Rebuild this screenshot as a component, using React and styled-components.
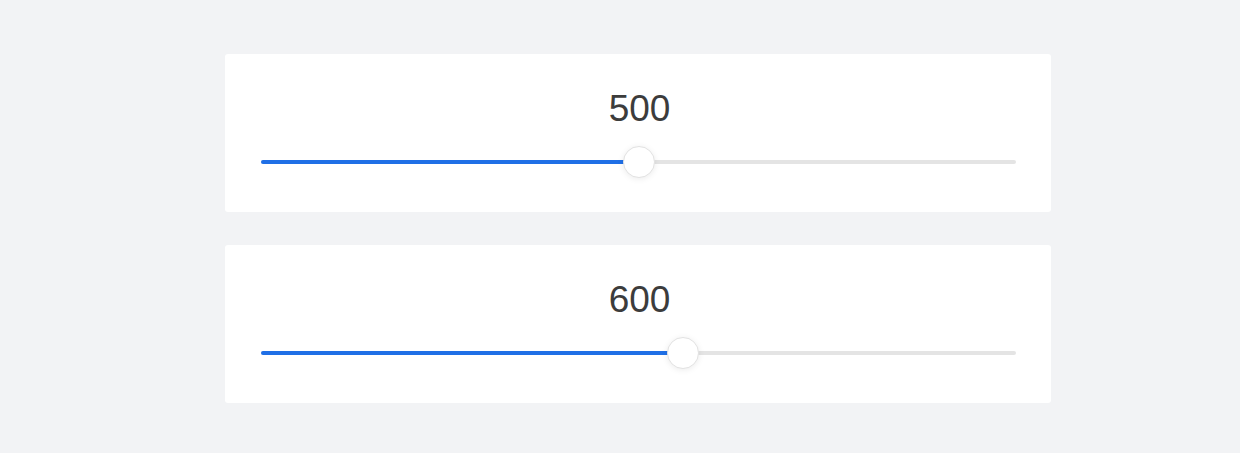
import React from 'react'
import styled, {createGlobalStyle} from 'styled-components'

const GlobalStyle = createGlobalStyle`
	html, body {
		margin: 0;
		padding: 0;
		background: #f2f3f5;
		font-family: "Liberation Sans", Arial, sans-serif;
	}
`

const Page = styled.main`
	display: flex;
	flex-direction: column;
	gap: 33px;
	padding: 54px 0 49px 225px;
	min-height: 453px;
	box-sizing: border-box;
`

const Card = styled.section`
	width: 826px;
	height: 158px;
	box-sizing: border-box;
	background: #ffffff;
	border-radius: 3px;
	padding: 35px 35px 0 36px;
	display: flex;
	flex-direction: column;
	align-items: stretch;
	gap: 17px;
`

const Value = styled.div`
	font-size: 37px;
	line-height: 40px;
	color: #3c3c3c;
	text-align: center;
	margin-left: 2px;
`

const Slider = styled.div`
	position: relative;
	height: 32px;
	display: flex;
	align-items: center;
`

const Track = styled.div`
	position: relative;
	width: 100%;
	height: 4px;
	border-radius: 2px;
	background: #e4e4e4;
`

const Fill = styled.div`
	position: absolute;
	left: 0;
	top: 0;
	bottom: 0;
	border-radius: 2px;
	background: #1f6fe6;
`

const Thumb = styled.div`
	position: absolute;
	top: 0;
	width: 32px;
	height: 32px;
	margin-left: -16px;
	box-sizing: border-box;
	border-radius: 50%;
	background: #ffffff;
	border: 1px solid #e2e2e2;
	box-shadow: 0 1px 6px rgba(0, 0, 0, 0.08);
`

const SliderCard = ({value, ratio}) => (
	<Card>
		<Value>{value}</Value>
		<Slider>
			<Track>
				<Fill style={{width: `${ratio * 100}%`}} />
			</Track>
			<Thumb style={{left: `${ratio * 100}%`}} />
		</Slider>
	</Card>
)

export default function App() {
	return (
		<>
			<GlobalStyle />
			<Page>
				<SliderCard value={500} ratio={0.5} />
				<SliderCard value={600} ratio={0.559} />
			</Page>
		</>
	)
}
